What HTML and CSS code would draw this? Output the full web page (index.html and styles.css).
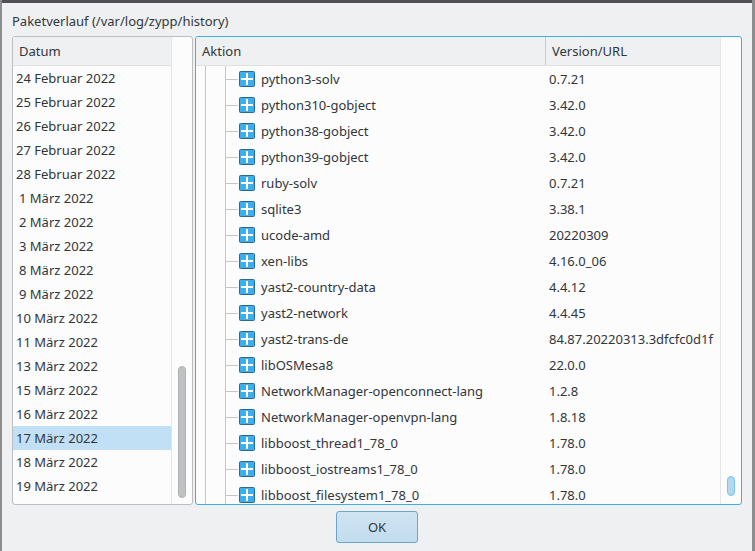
FILE: index.html
```html
<!DOCTYPE html>
<html lang="de">

<head>
    <meta charset="UTF-8">
    <title>Paketverlauf</title>
    <link rel="stylesheet" href="styles.css">
</head>

<body>
    <div class="dialog">
        <p class="caption">Paketverlauf (/var/log/zypp/history)</p>
        <div class="panes">
            <div class="pane dates">
                <div class="listcol">
                    <div class="head"><span class="headcell">Datum</span></div>
                    <ul class="datelist">
                        <li>24 Februar 2022</li>
                        <li>25 Februar 2022</li>
                        <li>26 Februar 2022</li>
                        <li>27 Februar 2022</li>
                        <li>28 Februar 2022</li>
                        <li class="short">1 März 2022</li>
                        <li class="short">2 März 2022</li>
                        <li class="short">3 März 2022</li>
                        <li class="short">8 März 2022</li>
                        <li class="short">9 März 2022</li>
                        <li>10 März 2022</li>
                        <li>11 März 2022</li>
                        <li>13 März 2022</li>
                        <li>15 März 2022</li>
                        <li>16 März 2022</li>
                        <li class="selected">17 März 2022</li>
                        <li>18 März 2022</li>
                        <li>19 März 2022</li>
                    </ul>
                </div>
                <div class="scrollcol">
                    <div class="thumb"></div>
                </div>
            </div>
            <div class="pane actions">
                <div class="treecol">
                    <div class="head">
                        <span class="headcell aktion">Aktion</span>
                        <span class="headcell version">Version/URL</span>
                    </div>
                    <div class="tree" id="tree"></div>
                </div>
                <div class="scrollcol wide">
                    <div class="thumb small"></div>
                </div>
            </div>
        </div>
        <div class="buttons">
            <button type="button" class="okbtn">OK</button>
        </div>
    </div>
    <script>
        const rows = [
            ["python3-solv", "0.7.21"],
            ["python310-gobject", "3.42.0"],
            ["python38-gobject", "3.42.0"],
            ["python39-gobject", "3.42.0"],
            ["ruby-solv", "0.7.21"],
            ["sqlite3", "3.38.1"],
            ["ucode-amd", "20220309"],
            ["xen-libs", "4.16.0_06"],
            ["yast2-country-data", "4.4.12"],
            ["yast2-network", "4.4.45"],
            ["yast2-trans-de", "84.87.20220313.3dfcfc0d1f"],
            ["libOSMesa8", "22.0.0"],
            ["NetworkManager-openconnect-lang", "1.2.8"],
            ["NetworkManager-openvpn-lang", "1.8.18"],
            ["libboost_thread1_78_0", "1.78.0"],
            ["libboost_iostreams1_78_0", "1.78.0"],
            ["libboost_filesystem1_78_0", "1.78.0"]
        ];
        const icon = '<svg class="icon" width="16" height="16" viewBox="0 0 16 16">' +
            '<rect x="0.5" y="0.5" width="15" height="15" rx="1" fill="#3daee9" stroke="#256d94"/>' +
            '<path d="M8 2v12M2 8h12" stroke="#fff" stroke-width="2"/></svg>';
        let html = "";
        for (let i = 0; i < rows.length; i++) {
            html += `<div class="row"><span class="guide"></span><span class="branch"></span>${icon}` +
                `<span class="name">${rows[i][0]}</span><span class="ver">${rows[i][1]}</span></div>`;
        }
        document.getElementById("tree").innerHTML = html;
    </script>
</body>

</html>
```

FILE: styles.css
```css
* {
    box-sizing: border-box;
}

html,
body {
    margin: 0;
    height: 100%;
    overflow: hidden;
}

body {
    background: #8b8d8f;
    font-family: "Noto Sans", sans-serif;
    font-size: 13px;
    color: #31363b;
}

.dialog {
    width: 750px;
    height: 551px;
    margin-left: 2px;
    background: #eff0f1;
    border-top: 3px solid #4d5257;
    padding: 0 10px;
    display: flex;
    flex-direction: column;
}

.caption {
    margin: 0;
    height: 33px;
    padding: 9px 0 0 0;
    line-height: 18px;
}

.panes {
    display: flex;
    gap: 2px;
    height: 469px;
}

.pane {
    display: flex;
    flex: none;
    background: #fcfcfc;
    border: 1px solid #bcbebf;
    border-radius: 3px;
    overflow: hidden;
}

.dates {
    width: 181px;
}

.actions {
    width: 547px;
    border-color: #3daee9;
}

.listcol {
    width: 158px;
    flex: none;
}

.treecol {
    width: 524px;
    flex: none;
}

.scrollcol {
    flex: 1;
    border-left: 1px solid #e4e5e6;
    padding: 329px 0 0 6px;
}

.scrollcol.wide {
    padding-top: 439px;
}

.thumb {
    width: 8px;
    height: 132px;
    background: #c0c1c2;
    border: 1px solid #b0b1b2;
    border-radius: 4px;
}

.thumb.small {
    height: 20px;
    background: #b0d8f0;
    border-color: #7cc3ee;
}

.head {
    display: flex;
    height: 29px;
    background: #eff0f1;
    border-bottom: 1px solid #dfe0e1;
}

.headcell {
    line-height: 28px;
    padding-left: 6px;
}

.aktion {
    width: 350px;
    border-right: 1px solid #c9cacb;
}

.datelist {
    list-style: none;
    margin: 0;
    padding: 0;
}

.datelist li {
    height: 24px;
    line-height: 24px;
    padding-left: 3px;
    white-space: nowrap;
}

.datelist li.short {
    padding-left: 6px;
}

.datelist li.selected {
    background: #c2e0f5;
}

.tree {
    height: 438px;
    overflow: hidden;
}

.row {
    display: flex;
    align-items: center;
    height: 26px;
    position: relative;
    white-space: nowrap;
}

.guide {
    position: absolute;
    top: 0;
    bottom: 0;
    left: 9px;
    width: 21px;
    border-left: 1px solid #c6c7c8;
    border-right: 1px solid #c6c7c8;
}

.branch {
    width: 12px;
    height: 1px;
    margin-left: 30px;
    background: #c6c7c8;
    flex: none;
}

.icon {
    margin-left: 1px;
    flex: none;
}

.name {
    width: 288px;
    margin-left: 6px;
    flex: none;
}

.buttons {
    display: flex;
    justify-content: center;
    padding-top: 6px;
}

.okbtn {
    width: 82px;
    height: 32px;
    font: inherit;
    color: #31363b;
    background: linear-gradient(#d0e4f2, #c2dcee);
    border: 1px solid #6aa6c9;
    border-radius: 3px;
}
```
